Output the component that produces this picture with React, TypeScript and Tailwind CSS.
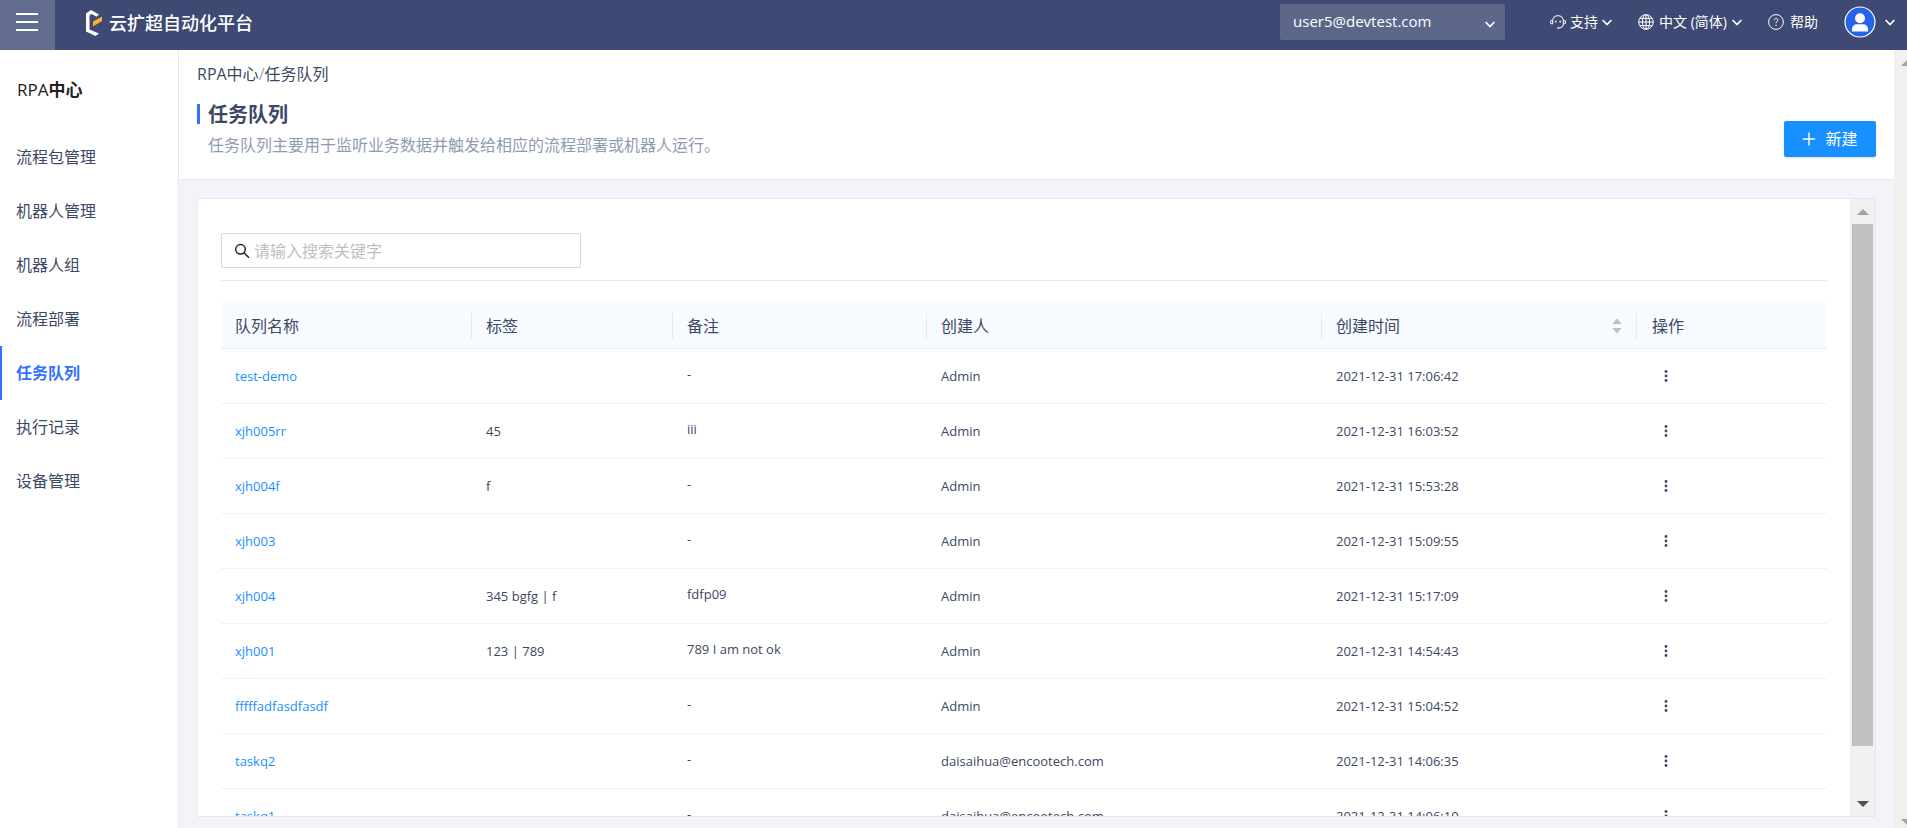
import { useState } from "react";

const menuItems = [
  "流程包管理",
  "机器人管理",
  "机器人组",
  "流程部署",
  "任务队列",
  "执行记录",
  "设备管理",
];

const queues = [
  { name: "test-demo", tags: "", remark: "-", creator: "Admin", createdAt: "2021-12-31 17:06:42" },
  { name: "xjh005rr", tags: "45", remark: "iii", creator: "Admin", createdAt: "2021-12-31 16:03:52" },
  { name: "xjh004f", tags: "f", remark: "-", creator: "Admin", createdAt: "2021-12-31 15:53:28" },
  { name: "xjh003", tags: "", remark: "-", creator: "Admin", createdAt: "2021-12-31 15:09:55" },
  { name: "xjh004", tags: "345 bgfg | f", remark: "fdfp09", creator: "Admin", createdAt: "2021-12-31 15:17:09" },
  { name: "xjh001", tags: "123 | 789", remark: "789 I am not ok", creator: "Admin", createdAt: "2021-12-31 14:54:43" },
  { name: "fffffadfasdfasdf", tags: "", remark: "-", creator: "Admin", createdAt: "2021-12-31 15:04:52" },
  { name: "taskq2", tags: "", remark: "-", creator: "daisaihua@encootech.com", createdAt: "2021-12-31 14:06:35" },
  { name: "taskq1", tags: "", remark: "-", creator: "daisaihua@encootech.com", createdAt: "2021-12-31 14:06:19" },
];

function Chevron({ className = "" }: { className?: string }) {
  return (
    <svg className={className} width="10" height="7" viewBox="0 0 10 7" fill="none" stroke="currentColor" strokeWidth="1.700">
      <path d="M.6 1l4.400 4.600L9.400 1" />
    </svg>
  );
}

function Logo() {
  return (
    <svg width="18" height="28" viewBox="0 0 18 28">
      <path
        d="M1 4.500L6 1l8 4.500-2.500 2.300L6.500 5 4.500 6.500v14l9.500 4L10.500 27 1 22.500z"
        fill="#fff"
      />
      <path d="M17 7.500v4.500L8 17.500v-5z" fill="#fbb021" />
    </svg>
  );
}

function SupportIcon() {
  return (
    <svg width="16" height="16" viewBox="0 0 16 16" fill="none" stroke="#e3e6ef" strokeWidth="1.100">
      <path d="M2.600 9.500V7a5.400 5.400 0 0 1 10.800 0v2.500" />
      <path d="M2.600 6.500H1.500a1 1 0 0 0-1 1v1.200a1 1 0 0 0 1 1h1.100zM13.400 6.500h1.100a1 1 0 0 1 1 1v1.200a1 1 0 0 1-1 1h-1.100z" />
      <path d="M13.400 9.700c0 2.500-1.600 4-4.400 4.300" />
      <circle cx="8.200" cy="14" r="1" fill="#e3e6ef" stroke="none" />
      <circle cx="5.800" cy="7.600" r="0.900" fill="#fff" stroke="none" />
      <circle cx="10.200" cy="7.600" r="0.900" fill="#fff" stroke="none" />
    </svg>
  );
}

function GlobeIcon() {
  return (
    <svg width="16" height="16" viewBox="0 0 16 16" fill="none" stroke="#fff" strokeWidth="1">
      <circle cx="8" cy="8" r="7.300" />
      <ellipse cx="8" cy="8" rx="3.600" ry="7.300" />
      <path d="M8 .7v14.600M.7 8h14.600M1.800 4.400h12.400M1.800 11.600h12.400" />
    </svg>
  );
}

function HelpIcon() {
  return (
    <svg width="16" height="16" viewBox="0 0 16 16" fill="none" stroke="#fff" strokeWidth="1">
      <circle cx="8" cy="8" r="7.400" />
      <path d="M6.200 6.300c0-1.200.8-1.900 1.800-1.900s1.800.7 1.800 1.700c0 1.300-1.800 1.500-1.800 3.200" />
      <circle cx="8" cy="11.300" r="0.700" fill="#fff" stroke="none" />
    </svg>
  );
}

function Avatar() {
  return (
    <svg width="32" height="32" viewBox="0 0 32 32">
      <circle cx="16" cy="16" r="15" fill="#2563eb" stroke="#fff" strokeWidth="1.200" />
      <circle cx="16" cy="12.300" r="5" fill="#fff" />
      <path d="M8 25.500v-2.200c0-3 2.200-5 5-5h6c2.800 0 5 2 5 5v2.200z" fill="#fff" />
    </svg>
  );
}

function Header() {
  return (
    <header className="flex h-[50px] shrink-0 items-stretch bg-[#3e4a73] text-white">
      <button
        aria-label="菜单"
        className="flex w-[55px] flex-col items-start gap-[6px] bg-[#616c8f] pt-[13px] pl-4"
      >
        <span className="h-[2px] w-[22px] bg-white" />
        <span className="h-[2px] w-[22px] bg-white" />
        <span className="h-[2px] w-[22px] bg-white" />
      </button>
      <div className="flex items-center gap-[6px] pb-1 pl-[30px]">
        <Logo />
        <span className="text-[18px] font-medium">云扩超自动化平台</span>
      </div>

      <div className="ml-auto flex items-center pr-3 pb-[6px]">
        <div className="mr-[45px] grid w-[225px] items-center">
          <select
            aria-label="账号"
            className="col-start-1 row-start-1 h-9 appearance-none rounded-xs bg-[#5c678a] px-[13px] pb-[2px] text-[15px] outline-none"
          >
            <option>user5@devtest.com</option>
          </select>
          <Chevron className="pointer-events-none col-start-1 row-start-1 mt-1 mr-[10px] justify-self-end" />
        </div>
        <button className="mr-[26px] flex items-center gap-1 text-sm">
          <SupportIcon />
          <span>支持</span>
          <Chevron />
        </button>
        <button className="mr-[26px] flex items-center gap-[5px] text-sm">
          <GlobeIcon />
          <span>中文 (简体)</span>
          <Chevron />
        </button>
        <a href="#help" className="mr-[26px] flex items-center gap-[6px] text-sm">
          <HelpIcon />
          <span>帮助</span>
        </a>
        <button aria-label="用户" className="flex items-center gap-[9px]">
          <Avatar />
          <Chevron />
        </button>
      </div>
    </header>
  );
}

function Sidebar() {
  return (
    <aside className="w-[179px] shrink-0 border-r border-[#e8e8ea] bg-white">
      <h2 className="flex h-20 items-center pl-[17px] text-[17px] font-medium text-[#222]">
        <span>
          RPA<b className="font-bold">中心</b>
        </span>
      </h2>
      <nav>
        {menuItems.map((item) => (
          <a
            key={item}
            href="#"
            className={
              item === "任务队列"
                ? "flex h-[54px] items-center border-l-2 border-[#3370ff] pl-[14px] font-bold text-[#3370ff]"
                : "flex h-[54px] items-center border-l-2 border-transparent pl-[14px]"
            }
          >
            {item}
          </a>
        ))}
      </nav>
    </aside>
  );
}

function PageHeader() {
  return (
    <div className="flex h-[130px] shrink-0 items-start justify-between border-b border-[#e8e8ea] bg-white px-[18px]">
      <div className="pt-3">
        <div className="leading-6">
          RPA中心<span className="text-[#9aa3b8]">/</span>任务队列
        </div>
        <div className="mt-[18px] border-l-[3px] border-[#3370ff] pl-2">
          <h1 className="pt-[2px] text-[20px] leading-[18px] font-bold">任务队列</h1>
        </div>
        <p className="mt-[9px] pl-[11px] leading-6 text-[#8f9bb3]">
          任务队列主要用于监听业务数据并触发给相应的流程部署或机器人运行。
        </p>
      </div>
      <button className="mt-[71px] flex h-9 w-[92px] items-center justify-center gap-[9px] rounded-xs bg-[#1890ff] text-white shadow-sm">
        <svg width="14" height="14" viewBox="0 0 14 14" stroke="#fff" strokeWidth="1.400">
          <path d="M7 .5v13M.8 7h12.400" />
        </svg>
        新建
      </button>
    </div>
  );
}

function QueueTable() {
  return (
    <table className="mt-[22px] w-full table-fixed border-separate border-spacing-0 text-left">
      <colgroup>
        <col className="w-[251px]" />
        <col className="w-[201px]" />
        <col className="w-[254px]" />
        <col className="w-[395px]" />
        <col className="w-[315px]" />
        <col className="w-[190px]" />
      </colgroup>
      <thead className="bg-[#f7faff]">
        <tr>
          {["队列名称", "标签", "备注", "创建人", "创建时间", "操作"].map((title) => (
            <th key={title} className="h-[46px] border-b border-[#ebeef5] p-0 font-normal">
              <div
                className={
                  title === "操作"
                    ? "flex h-[26px] items-center pl-[15px]"
                    : "flex h-[26px] items-center justify-between border-r border-[#e6e9f0] pr-[14px] pl-[14px]"
                }
              >
                {title}
                {title === "创建时间" && (
                  <button aria-label="排序">
                    <svg width="10" height="16" viewBox="0 0 10 16" fill="#bfbfbf">
                      <path d="M5 .5L9.500 6h-9zM5 15.500L.5 10h9z" />
                    </svg>
                  </button>
                )}
              </div>
            </th>
          ))}
        </tr>
      </thead>
      <tbody className="text-[13px]">
        {queues.map((queue) => (
          <tr key={queue.name}>
            <td className="h-[55px] border-b border-[#eef1f8] p-0 pt-[2px] pl-[14px]">
              <a href="#" className="text-[#1890ff]">
                {queue.name}
              </a>
            </td>
            <td className="border-b border-[#eef1f8] p-0 pt-[2px] pl-[14px]">{queue.tags}</td>
            <td className="border-b border-[#eef1f8] p-0 pb-[2px] pl-[14px]">{queue.remark}</td>
            <td className="border-b border-[#eef1f8] p-0 pt-[2px] pl-[14px]">{queue.creator}</td>
            <td className="border-b border-[#eef1f8] p-0 pt-[2px] pl-[14px]">{queue.createdAt}</td>
            <td className="border-b border-[#eef1f8] p-0 pl-[14px]">
              <button aria-label="更多操作" className="flex w-[30px] justify-center">
                <svg width="4" height="14" viewBox="0 0 4 14" fill="currentColor">
                  <circle cx="2" cy="2.500" r="1.400" />
                  <circle cx="2" cy="7" r="1.400" />
                  <circle cx="2" cy="11.500" r="1.400" />
                </svg>
              </button>
            </td>
          </tr>
        ))}
      </tbody>
    </table>
  );
}

function PanelScrollbar() {
  return (
    <div className="flex w-[25px] shrink-0 flex-col bg-[#f0f0f0]">
      <div className="flex h-[25px] shrink-0 items-center justify-center">
        <svg width="12" height="6" viewBox="0 0 12 6" fill="#a3a3a3">
          <path d="M6 0l6 6H0z" />
        </svg>
      </div>
      <div className="flex-1 px-[2px]">
        <div className="h-[92%] bg-[#c1c1c1]" />
      </div>
      <div className="flex h-[25px] shrink-0 items-center justify-center">
        <svg width="12" height="6" viewBox="0 0 12 6" fill="#505050">
          <path d="M0 0h12L6 6z" />
        </svg>
      </div>
    </div>
  );
}

function PageScrollbar() {
  return (
    <div className="flex w-[13px] shrink-0 flex-col justify-between overflow-hidden bg-[#f0f0f0] pt-[10px] pb-[3px] pl-[7px]">
      <svg className="shrink-0" width="12" height="6" viewBox="0 0 12 6" fill="#a3a3a3">
        <path d="M6 0l6 6H0z" />
      </svg>
      <svg className="shrink-0" width="12" height="6" viewBox="0 0 12 6" fill="#a3a3a3">
        <path d="M0 0h12L6 6z" />
      </svg>
    </div>
  );
}

export default function App() {
  const [keyword, setKeyword] = useState("");

  return (
    <div className="flex h-screen flex-col overflow-hidden bg-[#f3f4f9] font-['Open_Sans','Noto_Sans_CJK_SC',sans-serif] text-base text-[#3d4866]">
      <Header />
      <div className="flex min-h-0 flex-1">
        <Sidebar />
        <main className="flex min-w-0 flex-1 flex-col">
          <PageHeader />
          <div className="mx-[18px] mt-[18px] mb-[11px] flex min-h-0 flex-1 border border-[#e8e8ea] bg-white">
            <div className="min-w-0 flex-1 overflow-hidden px-[23px] pt-[34px]">
              <div className="border-b border-[#e8e8e8] pb-3">
                <label className="flex h-[35px] w-[360px] items-center gap-1 rounded-xs border border-[#d9d9d9] pl-3">
                  <svg width="16" height="16" viewBox="0 0 16 16" fill="none" stroke="#222" strokeWidth="1.500">
                    <circle cx="6.500" cy="6.300" r="4.800" />
                    <path d="M10 9.800l5 5" />
                  </svg>
                  <input
                    type="text"
                    aria-label="搜索"
                    placeholder="请输入搜索关键字"
                    value={keyword}
                    onChange={(e) => setKeyword(e.target.value)}
                    className="min-w-0 flex-1 outline-none placeholder:text-[#bfbfbf]"
                  />
                </label>
              </div>
              <QueueTable />
            </div>
            <PanelScrollbar />
          </div>
        </main>
        <PageScrollbar />
      </div>
    </div>
  );
}
